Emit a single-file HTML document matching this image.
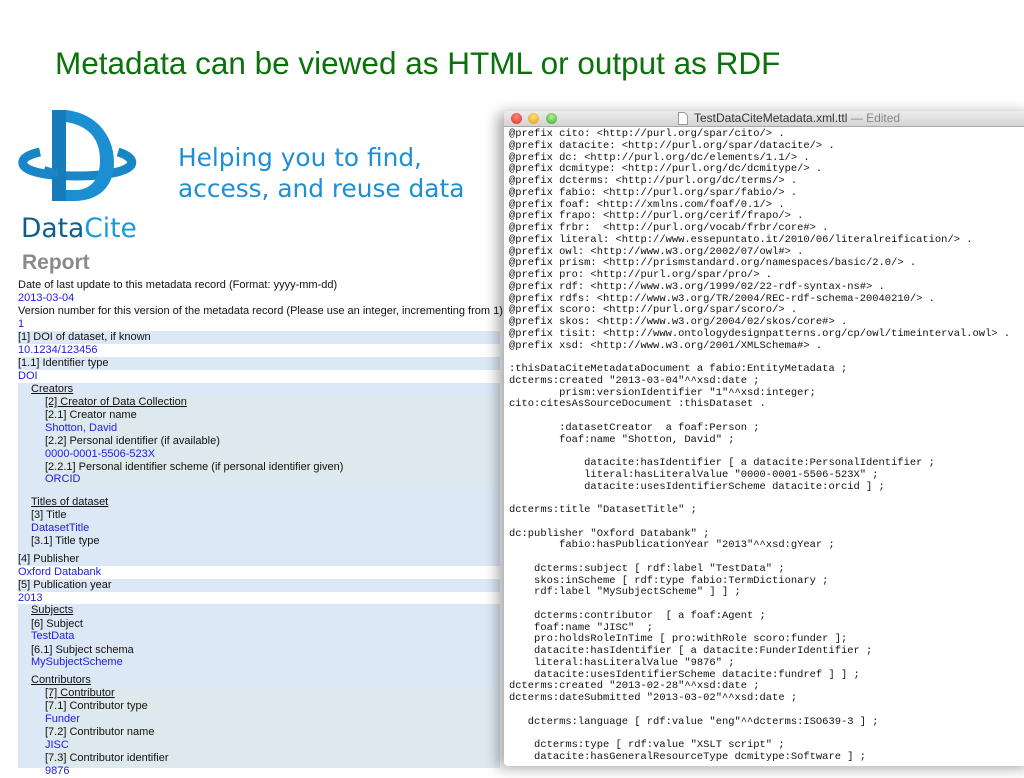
<!DOCTYPE html>
<html><head><meta charset="utf-8"><style>
body{margin:0;width:1024px;height:768px;overflow:hidden;background:#fff;position:relative;font-family:"Liberation Sans",Arial,sans-serif}
.a{position:absolute;white-space:pre}
#title{left:55px;top:45px;font-size:31.5px;color:#0b720b}
.help{left:178px;font-family:"DejaVu Sans",sans-serif;font-size:24.8px;color:#1e8fd6}
.l{position:absolute;font-size:11px;line-height:13px;color:#111;white-space:pre}
.v{color:#2020e0}
.u{text-decoration:underline}
#win{position:absolute;left:504px;top:111px;width:530px;height:655px;background:#fff;box-shadow:-6px 2px 14px rgba(0,0,0,.35);border-radius:4px 0 0 4px;overflow:hidden}
#tb{position:relative;z-index:2;height:15px;background:linear-gradient(#ececec,#d3d3d3);border-bottom:1px solid #a8a8a8}
.dot{position:absolute;top:2px;width:11px;height:11px;border-radius:50%}
pre{position:absolute;z-index:3;left:5px;top:18px;margin:0;font-family:"Liberation Mono","DejaVu Sans Mono",monospace;font-size:10.45px;line-height:11.75px;color:#111}
</style></head><body>
<div id="title" class="a">Metadata can be viewed as HTML or output as RDF</div>

<svg style="position:absolute;left:0;top:100px" width="160" height="120" viewBox="0 0 160 120">
<path d="M40 52 C26 55 20 60 24 66 C30 73 52 76 77 76 C104 76 126 72 131 65 C134 60 128 55 118 52" stroke="#1a86c8" stroke-width="9" fill="none"/>
<path d="M52 10 L66 10 C100 14 114 40 114 62 C114 86 100 100 76 101 L52 101 Z M66 22 L66 90 L78 90 C94 88 100 76 100 60 C100 40 90 26 66 22 Z" fill="#1b8fd2" fill-rule="evenodd"/>
<path d="M52 10 L66 10 L66 101 L52 101 Z" fill="#167cba"/>
<path d="M44 70 C50 72 54 73 58 73" stroke="#1a86c8" stroke-width="8" fill="none"/>
</svg>
<div class="a help" style="top:143px">Helping you to find,</div>
<div class="a help" style="top:174px">access, and reuse data</div>
<div class="a" style="left:21px;top:213px;font-family:'DejaVu Sans',sans-serif;font-size:26.5px;color:#0d5e8a">Data<span style="color:#1c9ad8">Cite</span></div>
<div class="a" style="left:22px;top:251px;font-size:21px;font-weight:bold;color:#8a8a8a">Report</div>

<div style="position:absolute;left:18px;top:331px;width:482px;height:13px;background:#dde8f7"></div>
<div style="position:absolute;left:18px;top:357px;width:482px;height:13px;background:#dde8f7"></div>
<div style="position:absolute;left:18px;top:383px;width:482px;height:170px;background:#dde8f7"></div>
<div style="position:absolute;left:45px;top:396px;width:455px;height:92px;background:#dee9ee"></div>
<div style="position:absolute;left:18px;top:553px;width:482px;height:13px;background:#dde8f7"></div>
<div style="position:absolute;left:18px;top:579px;width:482px;height:13px;background:#dde8f7"></div>
<div style="position:absolute;left:18px;top:604px;width:482px;height:164px;background:#dde8f7"></div>
<div style="position:absolute;left:45px;top:687px;width:455px;height:81px;background:#dee9ee"></div>

<div class="l" style="left:18px;top:279px">Date of last update to this metadata record (Format: yyyy-mm-dd)</div>
<div class="l v" style="left:18px;top:292px">2013-03-04</div>
<div class="l" style="left:18px;top:305px">Version number for this version of the metadata record (Please use an integer, incrementing from 1)</div>
<div class="l v" style="left:18px;top:318px">1</div>
<div class="l" style="left:18px;top:331px">[1] DOI of dataset, if known</div>
<div class="l v" style="left:18px;top:344px">10.1234/123456</div>
<div class="l" style="left:18px;top:357px">[1.1] Identifier type</div>
<div class="l v" style="left:18px;top:370px">DOI</div>
<div class="l u" style="left:31px;top:383px">Creators</div>
<div class="l u" style="left:45px;top:396px">[2] Creator of Data Collection</div>
<div class="l" style="left:45px;top:409px">[2.1] Creator name</div>
<div class="l v" style="left:45px;top:422px">Shotton, David</div>
<div class="l" style="left:45px;top:435px">[2.2] Personal identifier (if available)</div>
<div class="l v" style="left:45px;top:448px">0000-0001-5506-523X</div>
<div class="l" style="left:45px;top:461px">[2.2.1] Personal identifier scheme (if personal identifier given)</div>
<div class="l v" style="left:45px;top:473px">ORCID</div>
<div class="l u" style="left:31px;top:496px">Titles of dataset</div>
<div class="l" style="left:31px;top:509px">[3] Title</div>
<div class="l v" style="left:31px;top:522px">DatasetTitle</div>
<div class="l" style="left:31px;top:535px">[3.1] Title type</div>
<div class="l" style="left:18px;top:553px">[4] Publisher</div>
<div class="l v" style="left:18px;top:566px">Oxford Databank</div>
<div class="l" style="left:18px;top:579px">[5] Publication year</div>
<div class="l v" style="left:18px;top:592px">2013</div>
<div class="l u" style="left:31px;top:604px">Subjects</div>
<div class="l" style="left:31px;top:618px">[6] Subject</div>
<div class="l v" style="left:31px;top:630px">TestData</div>
<div class="l" style="left:31px;top:644px">[6.1] Subject schema</div>
<div class="l v" style="left:31px;top:656px">MySubjectScheme</div>
<div class="l u" style="left:31px;top:674px">Contributors</div>
<div class="l u" style="left:45px;top:687px">[7] Contributor</div>
<div class="l" style="left:45px;top:700px">[7.1] Contributor type</div>
<div class="l v" style="left:45px;top:713px">Funder</div>
<div class="l" style="left:45px;top:726px">[7.2] Contributor name</div>
<div class="l v" style="left:45px;top:739px">JISC</div>
<div class="l" style="left:45px;top:752px">[7.3] Contributor identifier</div>
<div class="l v" style="left:45px;top:765px">9876</div>

<div id="win">
<div id="tb">
<div class="dot" style="left:7px;background:radial-gradient(circle at 50% 35%,#ff8a80,#d8281e)"></div>
<div class="dot" style="left:24px;background:radial-gradient(circle at 50% 35%,#ffe080,#e09a10)"></div>
<div class="dot" style="left:42px;background:radial-gradient(circle at 50% 35%,#b0f090,#3aa828)"></div>
<svg style="position:absolute;left:174px;top:1px" width="10" height="13"><path d="M0.5 0.5H6.5L9.5 3.5V12.5H0.5Z" fill="#fff" stroke="#999"/></svg>
<div class="a" style="left:190px;top:0px;font-size:12px;color:#333">TestDataCiteMetadata.xml.ttl <span style="color:#888">— Edited</span></div>
</div>
<pre>@prefix cito: &lt;http://purl.org/spar/cito/&gt; .
@prefix datacite: &lt;http://purl.org/spar/datacite/&gt; .
@prefix dc: &lt;http://purl.org/dc/elements/1.1/&gt; .
@prefix dcmitype: &lt;http://purl.org/dc/dcmitype/&gt; .
@prefix dcterms: &lt;http://purl.org/dc/terms/&gt; .
@prefix fabio: &lt;http://purl.org/spar/fabio/&gt; .
@prefix foaf: &lt;http://xmlns.com/foaf/0.1/&gt; .
@prefix frapo: &lt;http://purl.org/cerif/frapo/&gt; .
@prefix frbr:  &lt;http://purl.org/vocab/frbr/core#&gt; .
@prefix literal: &lt;http://www.essepuntato.it/2010/06/literalreification/&gt; .
@prefix owl: &lt;http://www.w3.org/2002/07/owl#&gt; .
@prefix prism: &lt;http://prismstandard.org/namespaces/basic/2.0/&gt; .
@prefix pro: &lt;http://purl.org/spar/pro/&gt; .
@prefix rdf: &lt;http://www.w3.org/1999/02/22-rdf-syntax-ns#&gt; .
@prefix rdfs: &lt;http://www.w3.org/TR/2004/REC-rdf-schema-20040210/&gt; .
@prefix scoro: &lt;http://purl.org/spar/scoro/&gt; .
@prefix skos: &lt;http://www.w3.org/2004/02/skos/core#&gt; .
@prefix tisit: &lt;http://www.ontologydesignpatterns.org/cp/owl/timeinterval.owl&gt; .
@prefix xsd: &lt;http://www.w3.org/2001/XMLSchema#&gt; .

:thisDataCiteMetadataDocument a fabio:EntityMetadata ;
dcterms:created "2013-03-04"^^xsd:date ;
        prism:versionIdentifier "1"^^xsd:integer;
cito:citesAsSourceDocument :thisDataset .

        :datasetCreator  a foaf:Person ;
        foaf:name "Shotton, David" ;

            datacite:hasIdentifier [ a datacite:PersonalIdentifier ;
            literal:hasLiteralValue "0000-0001-5506-523X" ;
            datacite:usesIdentifierScheme datacite:orcid ] ;

dcterms:title "DatasetTitle" ;

dc:publisher "Oxford Databank" ;
        fabio:hasPublicationYear "2013"^^xsd:gYear ;

    dcterms:subject [ rdf:label "TestData" ;
    skos:inScheme [ rdf:type fabio:TermDictionary ;
    rdf:label "MySubjectScheme" ] ] ;

    dcterms:contributor  [ a foaf:Agent ;
    foaf:name "JISC"  ;
    pro:holdsRoleInTime [ pro:withRole scoro:funder ];
    datacite:hasIdentifier [ a datacite:FunderIdentifier ;
    literal:hasLiteralValue "9876" ;
    datacite:usesIdentifierScheme datacite:fundref ] ] ;
dcterms:created "2013-02-28"^^xsd:date ;
dcterms:dateSubmitted "2013-03-02"^^xsd:date ;

   dcterms:language [ rdf:value "eng"^^dcterms:ISO639-3 ] ;

    dcterms:type [ rdf:value "XSLT script" ;
    datacite:hasGeneralResourceType dcmitype:Software ] ;</pre>
</div>
</body></html>
